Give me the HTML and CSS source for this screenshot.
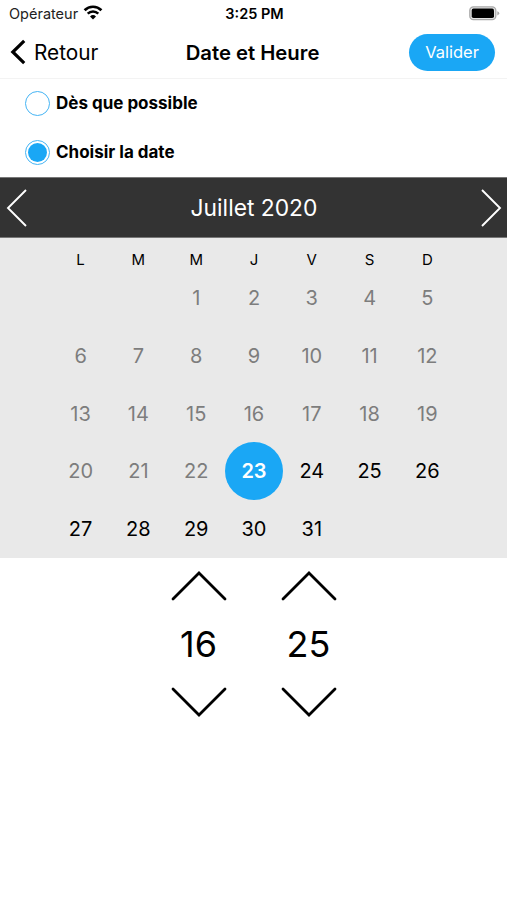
FILE: index.html
```html
<!DOCTYPE html>
<html lang="fr">
<head>
    <meta charset="UTF-8">
    <meta name="viewport" content="width=device-width, initial-scale=1.0">
    <title>Date et Heure</title>
    <link rel="stylesheet" href="styles.css">
</head>
<body>

    <!-- Status bar -->
    <div class="status-bar">
        <div class="carrier">
            <span>Opérateur</span>
            <svg class="wifi" width="20" height="15" viewBox="0 0 20 15">
                <path d="M1.6 5.2a12 12 0 0 1 16.8 0" fill="none" stroke="#000" stroke-width="2.7"/>
                <path d="M4.7 8.7a7.6 7.6 0 0 1 10.6 0" fill="none" stroke="#000" stroke-width="2.5"/>
                <path d="M10 14.4l-3-3a4.3 4.3 0 0 1 6 0z"/>
            </svg>
        </div>
        <span class="clock">3:25 PM</span>
        <svg class="battery" width="31" height="15" viewBox="0 0 31 15">
            <rect x=".8" y=".8" width="26" height="12.9" rx="3.6" fill="#e4e4e4" stroke="#a9a9a9" stroke-width="1.3"/>
            <rect x="2.7" y="2.6" width="22.3" height="9.4" rx="1.8"/>
            <path d="M28.3 5.2v4.2q1.9-.6 1.9-2.1t-1.9-2.1z" fill="#a9a9a9"/>
        </svg>
    </div>

    <!-- Header -->
    <header class="navbar">
        <a class="back" href="#">
            <svg width="16" height="26" viewBox="0 0 16 26">
                <path d="M14.2 1.8L2.8 13l11.4 11.2" fill="none" stroke="#000" stroke-width="3.2"/>
            </svg>
            <span>Retour</span>
        </a>
        <h1>Date et Heure</h1>
        <button class="btn" type="button">Valider</button>
    </header>

    <!-- Options -->
    <form class="options">
        <label class="option">
            <input type="radio" name="moment" value="asap">
            <span>Dès que possible</span>
        </label>
        <label class="option">
            <input type="radio" name="moment" value="date" checked>
            <span>Choisir la date</span>
        </label>
    </form>

    <!-- Calendar -->
    <section class="calendar">
        <div class="month">
            <svg width="22" height="40" viewBox="0 0 22 40">
                <path d="M20 2L2 20l18 18" fill="none" stroke="#fff" stroke-width="1.9"/>
            </svg>
            <h2>Juillet 2020</h2>
            <svg width="22" height="40" viewBox="0 0 22 40">
                <path d="M2 2l18 18L2 38" fill="none" stroke="#fff" stroke-width="1.9"/>
            </svg>
        </div>
        <div class="weekdays">
            <span>L</span><span>M</span><span>M</span><span>J</span><span>V</span><span>S</span><span>D</span>
        </div>
        <div class="days">
            <span class="past first">1</span>
            <span class="past">2</span>
            <span class="past">3</span>
            <span class="past">4</span>
            <span class="past">5</span>
            <span class="past">6</span>
            <span class="past">7</span>
            <span class="past">8</span>
            <span class="past">9</span>
            <span class="past">10</span>
            <span class="past">11</span>
            <span class="past">12</span>
            <span class="past">13</span>
            <span class="past">14</span>
            <span class="past">15</span>
            <span class="past">16</span>
            <span class="past">17</span>
            <span class="past">18</span>
            <span class="past">19</span>
            <span class="past">20</span>
            <span class="past">21</span>
            <span class="past">22</span>
            <span class="selected">23</span>
            <span>24</span>
            <span>25</span>
            <span>26</span>
            <span>27</span>
            <span>28</span>
            <span>29</span>
            <span>30</span>
            <span>31</span>
        </div>
    </section>

    <!-- Time -->
    <section class="time">
        <div class="spinner">
            <svg width="56" height="32" viewBox="0 0 56 32">
                <path d="M2 29L28 3l26 26" fill="none" stroke="#000" stroke-width="2.8" stroke-linecap="round"/>
            </svg>
            <span>16</span>
            <svg width="56" height="32" viewBox="0 0 56 32">
                <path d="M2 3l26 26L54 3" fill="none" stroke="#000" stroke-width="2.8" stroke-linecap="round"/>
            </svg>
        </div>
        <div class="spinner">
            <svg width="56" height="32" viewBox="0 0 56 32">
                <path d="M2 29L28 3l26 26" fill="none" stroke="#000" stroke-width="2.8" stroke-linecap="round"/>
            </svg>
            <span>25</span>
            <svg width="56" height="32" viewBox="0 0 56 32">
                <path d="M2 3l26 26L54 3" fill="none" stroke="#000" stroke-width="2.8" stroke-linecap="round"/>
            </svg>
        </div>
    </section>

</body>
</html>
```
FILE: styles.css
```css
/* Global Styles */
* {
    margin: 0;
    padding: 0;
    box-sizing: border-box;
}

body {
    font-family: 'Inter', sans-serif;
    background-color: #fff;
    color: #000;
}

svg {
    display: block;
}

/* Status bar */
.status-bar {
    display: grid;
    grid-template-columns: 1fr auto 1fr;
    align-items: center;
    height: 27px;
    padding: 0 7px 0 9px;
}

.carrier {
    display: flex;
    align-items: center;
    gap: 5px;
    font-size: 14.5px;
    color: #222;
}

.wifi {
    margin-top: -2px;
}

.clock {
    font-size: 14.5px;
    font-weight: 600;
}

.battery {
    justify-self: end;
}

/* Header */
.navbar {
    display: grid;
    grid-template-columns: 1fr auto 1fr;
    align-items: center;
    height: 52px;
    padding: 0 12px 1px 10px;
    border-bottom: 1px solid #f3f3f3;
}

.back {
    display: flex;
    align-items: center;
    gap: 8px;
    font-size: 20.8px;
    color: #000;
    text-decoration: none;
}

.navbar h1 {
    font-size: 20.3px;
    font-weight: 600;
}

.btn {
    justify-self: end;
    width: 86px;
    height: 37px;
    padding-bottom: 1px;
    background-color: #1aa7f5;
    color: #fff;
    font-family: inherit;
    font-size: 16.5px;
    border: none;
    border-radius: 19px;
}

/* Options */
.options {
    height: 98px;
    padding-left: 25px;
}

.option {
    display: flex;
    align-items: center;
    gap: 6px;
    height: 49px;
    font-size: 17px;
    font-weight: 700;
}

.option span {
    padding-bottom: 2px;
}

.option input {
    appearance: none;
    width: 25px;
    height: 25px;
    border: 1.5px solid #45b4f4;
    border-radius: 50%;
}

.option input:checked {
    padding: 2px;
    background: #1aa7f5 content-box;
}

/* Calendar */
.calendar {
    height: 381px;
    background-color: #e9e9e9;
}

.month {
    display: flex;
    justify-content: space-between;
    align-items: center;
    height: 61px;
    padding: 0 5px 0 6px;
    background-color: #333;
    border-top: 1px solid #777;
    border-bottom: 1px solid #777;
    color: #fff;
}

.month h2 {
    font-size: 22.8px;
    font-weight: 400;
}

.weekdays, .days {
    display: grid;
    grid-template-columns: repeat(7, 57.8px);
    justify-content: center;
    padding-left: 1px;
    text-align: center;
}

.weekdays {
    padding-top: 6px;
    font-size: 15px;
    line-height: 31px;
    height: 31px;
}

.days {
    grid-auto-rows: 57.8px;
    font-size: 20px;
    line-height: 58.6px;
}

.first {
    grid-column: 3;
}

.past {
    color: #7d7d7d;
}

.selected {
    background-color: #1aa7f5;
    border-radius: 50%;
    color: #fff;
    font-weight: 600;
}

/* Time */
.time {
    display: flex;
    justify-content: center;
    gap: 54px;
    padding-top: 12px;
}

.spinner {
    display: flex;
    flex-direction: column;
    align-items: center;
    width: 56px;
}

.spinner span {
    font-size: 36px;
    line-height: 84px;
}
```
